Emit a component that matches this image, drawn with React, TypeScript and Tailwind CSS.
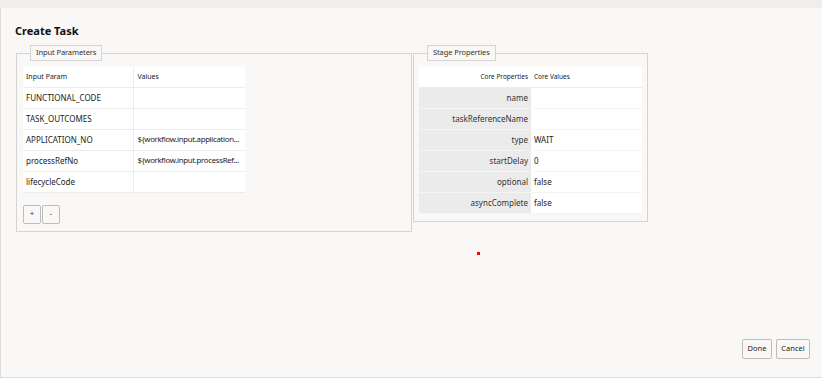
import React from "react";

const inputRows = [
  { param: "FUNCTIONAL_CODE", value: "" },
  { param: "TASK_OUTCOMES", value: "" },
  { param: "APPLICATION_NO", value: "${workflow.input.application..." },
  { param: "processRefNo", value: "${workflow.input.processRef..." },
  { param: "lifecycleCode", value: "" },
];

const stageRows = [
  { key: "name", value: "" },
  { key: "taskReferenceName", value: "" },
  { key: "type", value: "WAIT" },
  { key: "startDelay", value: "0" },
  { key: "optional", value: "false" },
  { key: "asyncComplete", value: "false" },
];

function Legend({ children }: { children: React.ReactNode }) {
  return (
    <div className="absolute -top-[9px] left-[13px] h-[16px] px-[5px] flex items-center bg-[#f9f8f6] border border-[#d4d4d4] text-[7.5px] tracking-[-0.1px] text-[#333]">
      {children}
    </div>
  );
}

export default function App() {
  return (
    <div
      className="w-[822px] h-[378px] bg-[#f9f8f6] flex flex-col text-[#222] overflow-hidden"
      style={{ fontFamily: '"Noto Sans", "Liberation Sans", sans-serif' }}
    >
      <div className="h-[8px] bg-[#efeeec] shrink-0" />
      <div className="flex-1 flex flex-col border-l border-[#dcdcdc] border-b">
        <h1 className="text-[11px] font-bold ml-[14px] mt-[16px] leading-[14px] text-[#111]">
          Create Task
        </h1>

        <div className="flex items-start mt-[15px] ml-[15px] gap-[1px]">
          {/* Input Parameters */}
          <div className="relative w-[396px] h-[179px] border border-[#d4d4d4] pt-[13px] pl-[6px]">
            <Legend>Input Parameters</Legend>
            <table className="w-[222px] border-collapse bg-white text-[8px] table-fixed">
              <colgroup>
                <col className="w-[110px]" />
                <col />
              </colgroup>
              <thead>
                <tr className="h-[20px] border-b border-[#ececec]">
                  <th className="text-left font-normal text-[7px] pl-[3px] border-r border-[#ececec]">
                    Input Param
                  </th>
                  <th className="text-left font-normal text-[7px] pl-[4px]">Values</th>
                </tr>
              </thead>
              <tbody>
                {inputRows.map((r) => (
                  <tr key={r.param} className="h-[21px] border-b border-[#ececec]">
                    <td className="pl-[3px] border-r border-[#ececec] whitespace-nowrap overflow-hidden">
                      {r.param}
                    </td>
                    <td className="pl-[4px] pr-[1px] whitespace-nowrap overflow-hidden text-[7.8px] tracking-[-0.3px]">
                      {r.value}
                    </td>
                  </tr>
                ))}
              </tbody>
            </table>
            <div className="flex gap-[1px] mt-[12px]">
              <button className="w-[18px] h-[19px] border border-[#bdbdbd] rounded-[2px] bg-[#f9f8f6] text-[7px] flex items-center justify-center">
                +
              </button>
              <button className="w-[18px] h-[19px] border border-[#bdbdbd] rounded-[2px] bg-[#f9f8f6] text-[7px] flex items-center justify-center">
                -
              </button>
            </div>
          </div>

          {/* Stage Properties */}
          <div className="relative w-[235px] h-[169px] border border-[#d4d4d4] pt-[13px] pl-[5px]">
            <Legend>Stage Properties</Legend>
            <table className="w-[223px] border-collapse bg-white text-[8px] table-fixed">
              <colgroup>
                <col className="w-[112px]" />
                <col />
              </colgroup>
              <thead>
                <tr className="h-[20px] border-b border-[#ececec]">
                  <th className="text-right font-normal text-[6.5px] pr-[3px]">Core Properties</th>
                  <th className="text-left font-normal text-[6.5px] pl-[3px]">Core Values</th>
                </tr>
              </thead>
              <tbody>
                {stageRows.map((r) => (
                  <tr key={r.key} className="h-[21px] border-b border-[#f4f4f4]">
                    <td className="text-right pr-[3px] bg-[#ebebeb] text-[#333]">{r.key}</td>
                    <td className="pl-[3px]">{r.value}</td>
                  </tr>
                ))}
              </tbody>
            </table>
          </div>
        </div>

        <div className="flex justify-center mt-[20px] ml-[134px]">
          <span className="w-[3px] h-[3px] bg-[#ff0000]" />
        </div>

        <div className="mt-auto mb-[18px] mr-[12px] flex justify-end gap-[4px]">
          <button className="h-[20px] w-[30px] border border-[#bdbdbd] rounded-[2px] bg-[#f9f8f6] text-[7.5px]">
            Done
          </button>
          <button className="h-[20px] w-[34px] border border-[#bdbdbd] rounded-[2px] bg-[#f9f8f6] text-[7.5px]">
            Cancel
          </button>
        </div>
      </div>
    </div>
  );
}
